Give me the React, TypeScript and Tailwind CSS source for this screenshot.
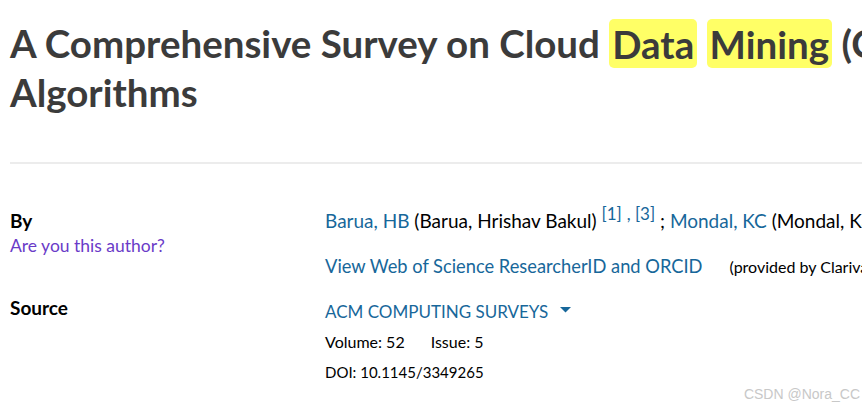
export default function App() {
  return (
    <div
      className="w-[862px] h-[411px] overflow-hidden bg-white relative"
      style={{ fontFamily: "Lato, 'Noto Sans', sans-serif" }}
    >
      <div className="w-[1400px] pl-[10px] pt-[19px]">
        <h1 className="text-[38.5px] font-bold leading-[49px] text-[#3b3b3b] whitespace-nowrap">
          A Comprehensive Survey on Cloud{" "}
          <span className="bg-[#ffff66] rounded-[5px] px-[3px] py-[1.5px]">Data</span>{" "}
          <span className="bg-[#ffff66] rounded-[5px] px-[3px] py-[1.5px]">Mining</span>{" "}
          (CDM) Frameworks and
          <br />
          Algorithms
        </h1>

        <div className="mt-[45px] h-[2px] bg-[#ececec]" />

        <div className="mt-[44px] grid grid-cols-[315px_1fr] text-[19px] leading-[25px] text-black">
          {/* By */}
          <div>
            <div className="font-bold">By</div>
            <div className="text-[17.5px] text-[#6a3bc8]">Are you this author?</div>
          </div>
          <div className="whitespace-nowrap">
            <div>
              <span className="text-[#17679a]">Barua, HB</span> (Barua, Hrishav Bakul){" "}
              <sup className="text-[#17679a] text-[17px]">[1]</sup>{" "}
              <sup className="text-[#17679a] text-[17px]">, [3]</sup> ;{" "}
              <span className="text-[#17679a]">Mondal, KC</span> (Mondal, Kartick Chandra)
            </div>
            <div className="mt-[21px] flex items-baseline">
              <span className="text-[18.3px] text-[#17679a]">
                View Web of Science ResearcherID and ORCID
              </span>
              <span className="ml-[27px] text-[16px]">(provided by Clarivate)</span>
            </div>
          </div>

          {/* Source */}
          <div className="mt-[16px] font-bold">Source</div>
          <div className="mt-[20px]">
            <div className="flex items-center text-[17px] text-[#17679a]">
              <span>ACM COMPUTING SURVEYS</span>
              <svg className="ml-[12px] mb-[3px]" width="11" height="6" viewBox="0 0 11 6">
                <path d="M0 0 L11 0 L5.5 5.5 Z" fill="#17679a" />
              </svg>
            </div>
            <div className="mt-[5px] text-[16px] flex gap-[26px]">
              <span>Volume: 52</span>
              <span>Issue: 5</span>
            </div>
            <div className="mt-[6px] text-[15px]">DOI: 10.1145/3349265</div>
          </div>
        </div>
      </div>

      <div
        className="absolute right-[2px] bottom-[6px] text-[14px] text-[#c8c8c8]"
        style={{ fontFamily: "'Liberation Sans', Arial, sans-serif" }}
      >
        CSDN @Nora_CC
      </div>
    </div>
  );
}
